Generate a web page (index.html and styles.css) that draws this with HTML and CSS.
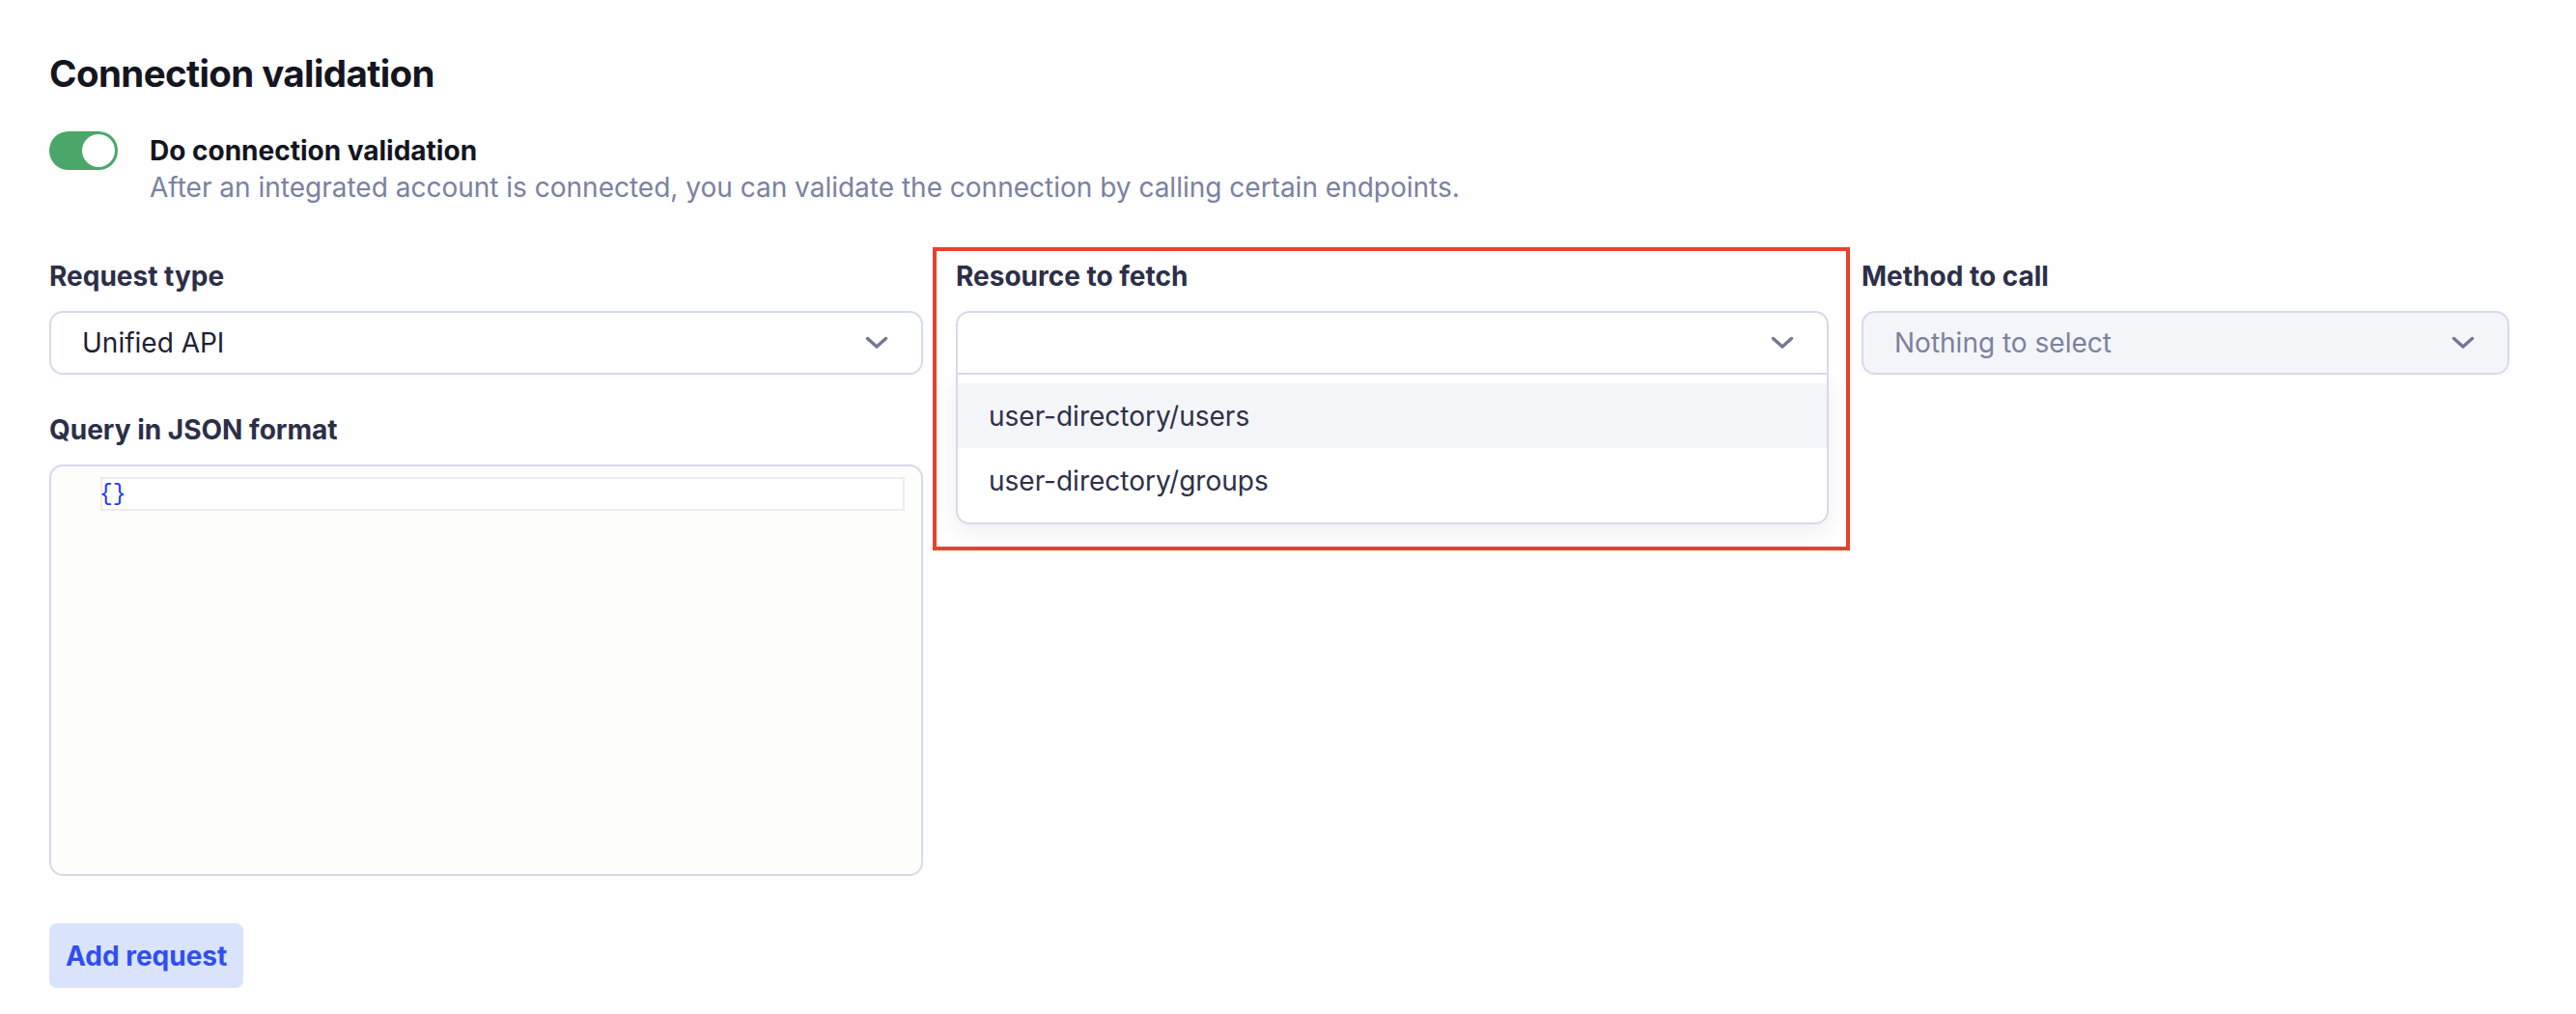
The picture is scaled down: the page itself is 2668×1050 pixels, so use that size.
FILE: index.html
```html
<!DOCTYPE html>
<html lang="en">
<head>
<meta charset="utf-8">
<title>Connection validation</title>
<link rel="stylesheet" href="styles.css">
</head>
<body>
<main class="page">
  <h1 class="title">Connection validation</h1>

  <div class="toggle-row">
    <span class="toggle" role="switch" aria-checked="true"><span class="knob"></span></span>
    <div class="toggle-text">
      <div class="toggle-label">Do connection validation</div>
      <div class="toggle-desc">After an integrated account is connected, you can validate the connection by calling certain endpoints.</div>
    </div>
  </div>

  <div class="grid">
    <div class="col">
      <div class="field">
        <div class="label">Request type</div>
        <div class="select">
          <span class="value">Unified API</span>
          <svg class="chev" width="24" height="14" viewBox="0 0 24 14"><path d="M2.5 2.5 L12 11 L21.5 2.5" fill="none" stroke="#737794" stroke-width="3.4" stroke-linecap="round" stroke-linejoin="round"/></svg>
        </div>
      </div>
      <div class="field">
        <div class="label">Query in JSON format</div>
        <div class="editor">
          <div class="code-line"><span class="code">{}</span></div>
        </div>
      </div>
      <button class="btn">Add request</button>
    </div>

    <div class="col col-mid">
      <div class="field">
        <div class="label">Resource to fetch</div>
        <div class="select open">
          <span class="value"></span>
          <svg class="chev" width="24" height="14" viewBox="0 0 24 14"><path d="M2.5 2.5 L12 11 L21.5 2.5" fill="none" stroke="#737794" stroke-width="3.4" stroke-linecap="round" stroke-linejoin="round"/></svg>
        </div>
        <ul class="menu">
          <li class="option active">user-directory/users</li>
          <li class="option">user-directory/groups</li>
        </ul>
      </div>
      <div class="highlight-box"></div>
    </div>

    <div class="col">
      <div class="field">
        <div class="label">Method to call</div>
        <div class="select disabled">
          <span class="value placeholder">Nothing to select</span>
          <svg class="chev" width="24" height="14" viewBox="0 0 24 14"><path d="M2.5 2.5 L12 11 L21.5 2.5" fill="none" stroke="#737794" stroke-width="3.4" stroke-linecap="round" stroke-linejoin="round"/></svg>
        </div>
      </div>
    </div>
  </div>
</main>
</body>
</html>
```

FILE: styles.css
```css
* { box-sizing: border-box; }
html, body { margin: 0; padding: 0; background: #fefefe; }
body {
  font-family: Inter, "Noto Sans", sans-serif;
  color: #2c2f48;
}
.page {
  padding: 52px 0 0 51px;
}
.title {
  margin: 0;
  font-size: 38.5px;
  line-height: 48px;
  font-weight: 700;
  letter-spacing: -0.6px;
  color: #14151f;
}
.toggle-row {
  display: flex;
  align-items: flex-start;
  gap: 33px;
  margin-top: 36px;
}
.toggle {
  flex: none;
  width: 71px;
  height: 40px;
  border-radius: 20px;
  background: #4ba66a;
  display: flex;
  justify-content: flex-end;
  align-items: center;
  padding: 3px;
}
.knob {
  width: 34px;
  height: 34px;
  border-radius: 50%;
  background: #fff;
}
.toggle-text { padding-top: 2px; }
.toggle-label {
  font-size: 28px;
  line-height: 36px;
  font-weight: 700;
  color: #14151f;
}
.toggle-desc {
  font-size: 28px;
  line-height: 38px;
  color: #7b81a1;
  margin-top: 1px;
}
.grid {
  display: grid;
  grid-template-columns: 905px 904px 671px;
  column-gap: 34px;
  margin-top: 56px;
  align-items: start;
}
.col { display: flex; flex-direction: column; }
.col-mid { position: relative; }
.field { display: flex; flex-direction: column; }
.label {
  font-size: 28px;
  line-height: 34px;
  font-weight: 700;
  color: #2c2f48;
  margin-bottom: 19px;
}
.select {
  height: 66px;
  border: 2px solid #d7daeb;
  border-radius: 14px;
  background: #fff;
  display: flex;
  align-items: center;
  justify-content: space-between;
  padding: 0 34px 0 32px;
}
.select .value {
  font-size: 28px;
  color: #1f2133;
}
.select .placeholder { color: #7b81a1; }
.select.disabled { background: #f4f5f9; }
.select.open {
  border-radius: 14px 14px 0 0;
}
.chev { flex: none; display: block; }
.menu {
  list-style: none;
  margin: 0;
  padding: 9px 0 10px;
  border: 2px solid #d7daeb;
  border-top: none;
  border-radius: 0 0 14px 14px;
  background: #fff;
  box-shadow: 0 8px 18px rgba(40, 50, 100, 0.07);
}
.option {
  height: 67px;
  display: flex;
  align-items: center;
  padding-left: 32px;
  font-size: 28px;
  color: #2d3047;
}
.option.active { background: #f4f5f9; }
.highlight-box {
  position: absolute;
  left: -24px;
  top: -13px;
  width: 950px;
  height: 314px;
  border: 4px solid #e9412a;
  pointer-events: none;
}
.field + .field { margin-top: 40px; }
.editor {
  height: 426px;
  border: 2px solid #d7daeb;
  border-radius: 14px;
  background: #fdfdfb;
  padding: 11px 17px 0 51px;
}
.code-line {
  height: 35px;
  border: 2px solid #ececec;
  background: #fefefe;
  display: flex;
  align-items: center;
  padding-left: 0;
}
.code {
  font-family: "Liberation Mono", "DejaVu Sans Mono", monospace;
  font-size: 23px;
  color: #2037f2;
  margin-left: -3px;
}
.btn {
  align-self: flex-start;
  margin-top: 49px;
  height: 67px;
  padding: 0 17px;
  border: none;
  border-radius: 8px;
  background: #dae3fc;
  color: #2f4ef0;
  font-family: Inter, "Noto Sans", sans-serif;
  font-size: 28px;
  font-weight: 700;
}
```
